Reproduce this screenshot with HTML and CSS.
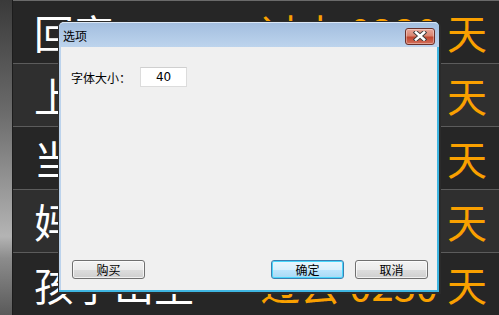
FILE: index.html
```html
<!DOCTYPE html>
<html lang="zh">
<head>
    <meta charset="UTF-8">
    <title>选项</title>
    <link rel="stylesheet" href="styles.css">
</head>
<body>
    <div class="screen">
        <div class="edge"></div>
        <div class="list">
            <div class="row"><span class="name">回家</span><span class="days">过去 0230 天</span></div>
            <div class="row alt"><span class="name">上班第一天</span><span class="days">过去 0230 天</span></div>
            <div class="row"><span class="name">当上经理</span><span class="days">过去 0230 天</span></div>
            <div class="row alt"><span class="name">妈妈生日</span><span class="days">过去 0230 天</span></div>
            <div class="row"><span class="name">孩子出生</span><span class="days">过去 0230 天</span></div>
        </div>
    </div>

    <div class="dialog">
        <div class="titlebar">
            <span class="title">选项</span>
            <button class="close">
                <svg width="14" height="10" viewBox="0 0 14 10">
                    <path d="M3 1.5 L11 8.5 M11 1.5 L3 8.5" stroke="#3a3a3a" stroke-width="4.4" stroke-linecap="square"/>
                    <path d="M3 1.5 L11 8.5 M11 1.5 L3 8.5" stroke="#fff" stroke-width="2.6" stroke-linecap="square"/>
                </svg>
            </button>
        </div>
        <div class="client">
            <div class="field">
                <label>字体大小：</label>
                <input class="size" type="text" value="40">
            </div>
            <div class="buttons">
                <button class="btn">购买</button>
                <div class="right">
                    <button class="btn primary">确定</button>
                    <button class="btn">取消</button>
                </div>
            </div>
        </div>
    </div>
</body>
</html>
```

FILE: styles.css
```css
body {
    margin: 0;
    width: 499px;
    height: 315px;
    overflow: hidden;
    background: #262626;
    font-family: "Noto Sans CJK SC", "Noto Sans", sans-serif;
}

.screen {
    display: flex;
    height: 315px;
}

.edge {
    width: 12px;
    flex-shrink: 0;
    background: linear-gradient(#3a3a3a 0%, #6a6a6a 35%, #b4b4b4 75%, #8c8c8c 82%, #5a5a5a 100%);
    border-right: 1px solid #1c1c1c;
}

.list {
    flex: 1;
}

.row {
    display: flex;
    align-items: center;
    height: 62px;
    border-top: 1px solid #5c5c5c;
    background-color: #262626;
    padding-left: 21px;
    padding-right: 12px;
    font-size: 40px;
    line-height: 62px;
}

.row:first-child {
    border-top-color: #6a6a6a;
}

.row.alt {
    background-color: #2f2f2f;
}

.name {
    flex: 1;
    color: #fff;
    white-space: nowrap;
}

.days {
    color: #f9a000;
    white-space: nowrap;
}

.dialog {
    position: absolute;
    left: 58px;
    top: 21px;
    width: 380px;
    height: 270px;
    display: flex;
    flex-direction: column;
    border: 1px solid #2b2b2b;
    border-right: 2px solid #2b2b2b;
    border-bottom: 2px solid #2b2b2b;
    border-radius: 6px 6px 0 0;
    background: #bcd3ec;
    box-shadow: inset -2px -2px 0 #3fb6e2;
}

.titlebar {
    display: flex;
    align-items: center;
    justify-content: space-between;
    height: 24px;
    padding: 0 4px 0 4px;
    border-radius: 5px 5px 0 0;
    background: linear-gradient(#a3bedf, #bdd4ed);
    border-top: 1px solid #dbe7f5;
}

.title {
    font-size: 12px;
    color: #000;
}

.close {
    width: 30px;
    height: 17px;
    margin-top: 2px;
    padding: 0;
    display: flex;
    align-items: center;
    justify-content: center;
    border: 1px solid #6b3029;
    border-radius: 3px;
    background: linear-gradient(#e9a79a 0%, #d98571 45%, #c0462f 55%, #d3705b 100%);
    box-shadow: inset 0 0 0 1px rgba(255, 255, 255, 0.35);
}

.client {
    flex: 1;
    display: flex;
    flex-direction: column;
    justify-content: space-between;
    margin: 0 2px 2px 2px;
    padding: 20px 9px 11px 10px;
    background: #f0f0f0;
}

.field {
    display: flex;
    align-items: center;
    gap: 9px;
    font-size: 12px;
}

.field label {
    color: #000;
}

.size {
    width: 47px;
    height: 20px;
    box-sizing: border-box;
    padding: 0;
    border: 1px solid #dcdcdc;
    border-top-color: #cfcfcf;
    background: #fff;
    text-align: center;
    font-family: "DejaVu Sans", sans-serif;
    font-size: 12px;
    color: #000;
}

.buttons {
    display: flex;
    justify-content: space-between;
    padding-left: 1px;
}

.right {
    display: flex;
    gap: 11px;
}

.btn {
    width: 73px;
    height: 19px;
    padding: 0;
    border: 1px solid #707070;
    border-radius: 3px;
    background: linear-gradient(#f3f3f3 0%, #ebebeb 50%, #dddddd 51%, #cfcfcf 100%);
    box-shadow: inset 0 0 0 1px rgba(255, 255, 255, 0.7);
    font-family: "Noto Sans CJK SC", sans-serif;
    font-size: 12px;
    line-height: 17px;
    color: #000;
}

.btn.primary {
    border-color: #3c7fb1;
    background: linear-gradient(#eaf6fd 0%, #d9f0fc 50%, #bee6fd 51%, #a7d9f5 100%);
    box-shadow: inset 0 0 0 1px #48d6fb;
}
```
